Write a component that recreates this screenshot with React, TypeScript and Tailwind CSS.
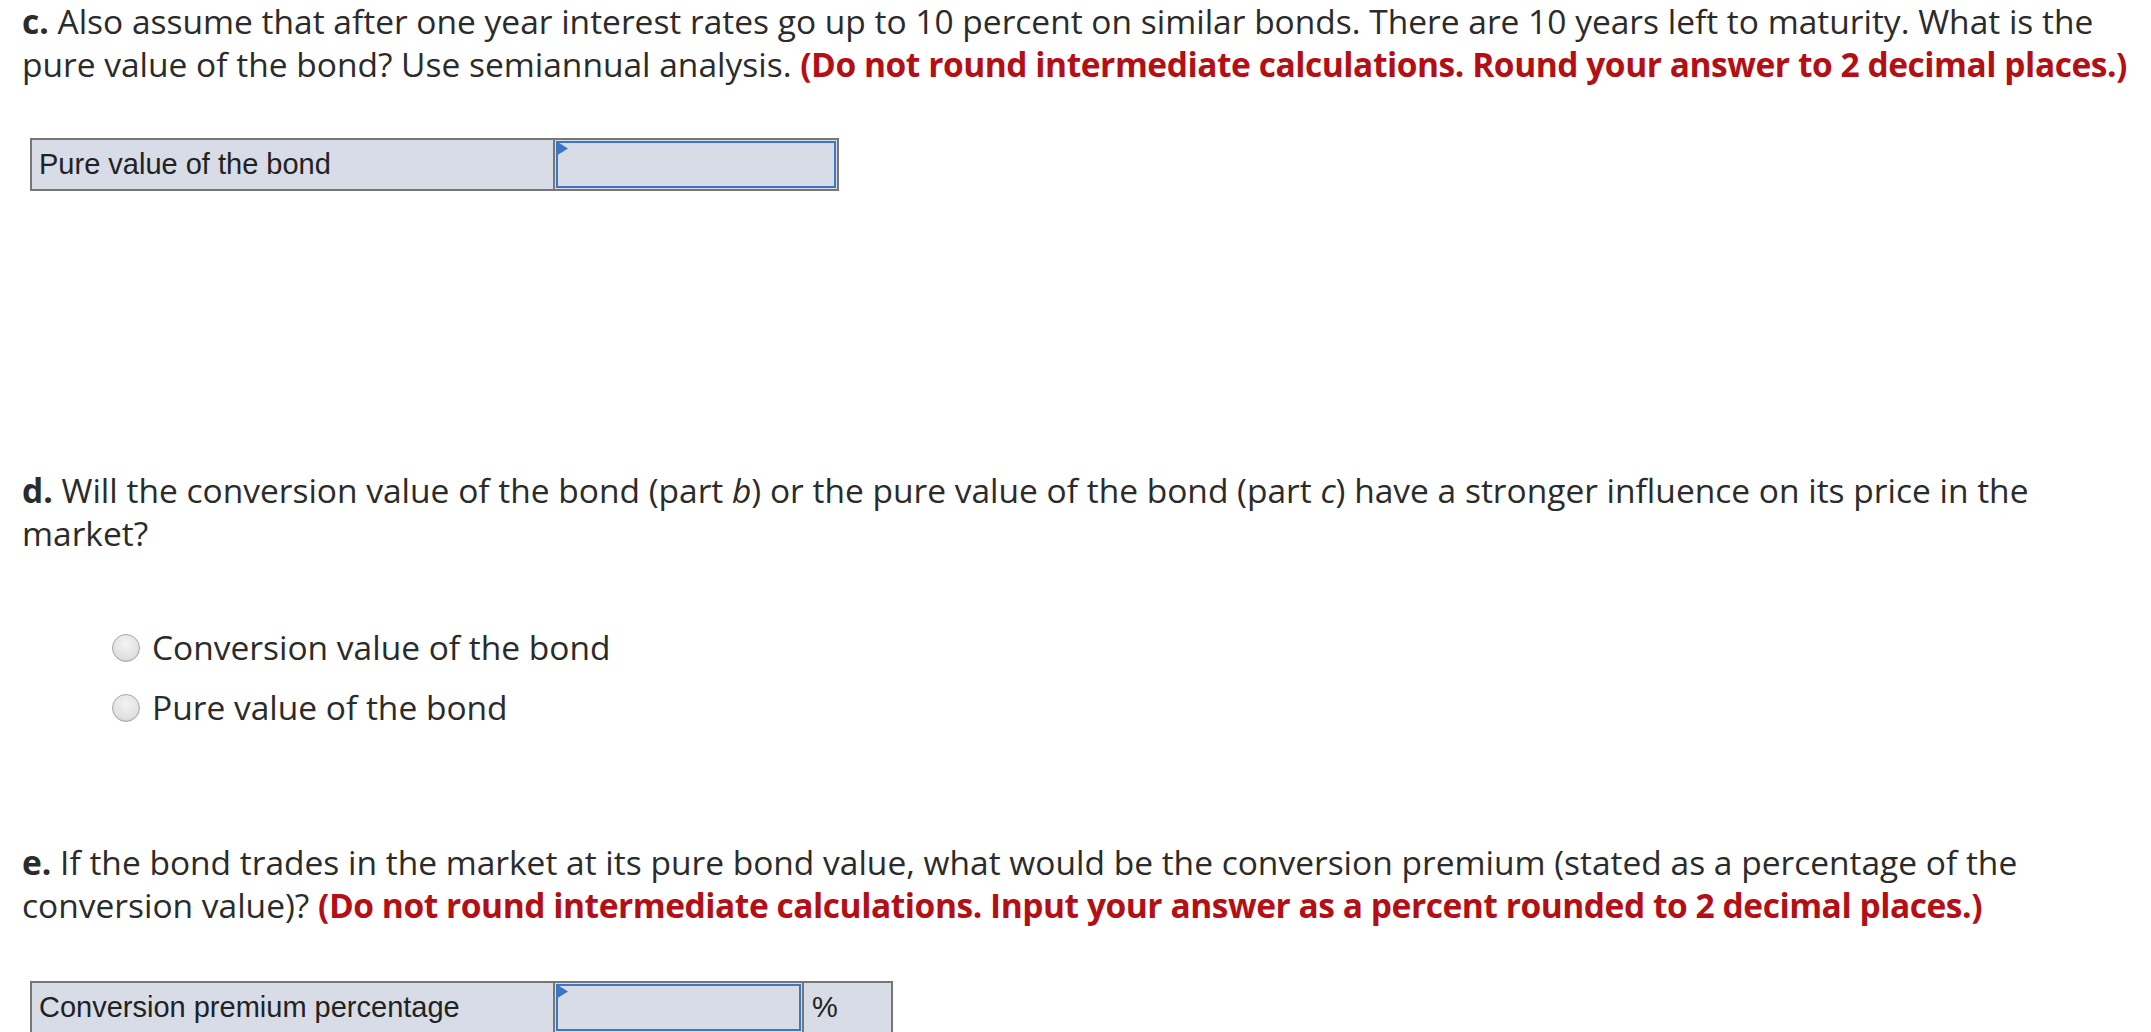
import React from "react";

function Marker() {
  return (
    <svg className="absolute -left-[2px] -top-[2px]" width="12" height="15" viewBox="0 0 12 15">
      <polygon points="0,0 12,7.5 0,15" fill="#3a76c4" />
    </svg>
  );
}

function AnswerCell({ width }: { width: string }) {
  return (
    <div className={`relative h-full border-l-2 border-[#767676] p-px ${width}`}>
      <div className="relative h-full w-full border-2 border-[#3b77c2]">
        <Marker />
      </div>
    </div>
  );
}

function Radio({ label }: { label: string }) {
  return (
    <label className="flex items-center gap-[12px]">
      <span className="h-[28px] w-[28px] rounded-full border border-[#a8a8a8] bg-[radial-gradient(circle_at_50%_35%,#f4f4f4,#d6d6d6)] shadow-[inset_0_-1px_1px_rgba(0,0,0,0.08)]" />
      <span>{label}</span>
    </label>
  );
}

export default function App() {
  return (
    <div className="min-h-screen bg-white pl-[22px] text-[33.5px] leading-[43px] text-[#2b2b2b] [font-family:'Open_Sans',Lato,sans-serif]">
      {/* part c */}
      <p>
        <b>c.</b> Also assume that after one year interest rates go up to 10 percent on similar bonds. There are 10 years left to maturity. What is the
        <br />
        <span className="whitespace-nowrap">
          pure value of the bond? Use semiannual analysis.{" "}
          <b className="tracking-[-0.45px] text-[#b30f14]">(Do not round intermediate calculations. Round your answer to 2 decimal places.)</b>
        </span>
      </p>

      <div className="mt-[52px] ml-[8px] flex h-[53px] w-[809px] border-2 border-[#767676] bg-[#d8dce6] [font-family:'Liberation_Sans',Arial,sans-serif] text-[29px] leading-none text-[#222]">
        <div className="flex w-[521px] items-center px-[7px]">Pure value of the bond</div>
        <AnswerCell width="w-[284px]" />
      </div>

      {/* part d */}
      <p className="mt-[278px]">
        <b>d.</b> Will the conversion value of the bond (part <i>b</i>) or the pure value of the bond (part <i>c</i>) have a stronger influence on its price in the
        <br />
        market?
      </p>

      <div className="mt-[71px] ml-[90px] flex flex-col gap-[17px]">
        <Radio label="Conversion value of the bond" />
        <Radio label="Pure value of the bond" />
      </div>

      {/* part e */}
      <p className="mt-[112px]">
        <b>e.</b> If the bond trades in the market at its pure bond value, what would be the conversion premium (stated as a percentage of the
        <br />
        <span className="whitespace-nowrap">
          conversion value)?{" "}
          <b className="tracking-[-0.45px] text-[#b30f14]">(Do not round intermediate calculations. Input your answer as a percent rounded to 2 decimal places.)</b>
        </span>
      </p>

      <div className="mt-[54px] ml-[8px] flex h-[53px] w-[863px] border-2 border-[#767676] bg-[#d8dce6] [font-family:'Liberation_Sans',Arial,sans-serif] text-[29px] leading-none text-[#222]">
        <div className="flex w-[521px] items-center px-[7px]">Conversion premium percentage</div>
        <AnswerCell width="w-[249px]" />
        <div className="flex flex-1 items-center border-l-2 border-[#767676] px-[8px]">%</div>
      </div>
      <div className="h-[40px]" />
    </div>
  );
}
